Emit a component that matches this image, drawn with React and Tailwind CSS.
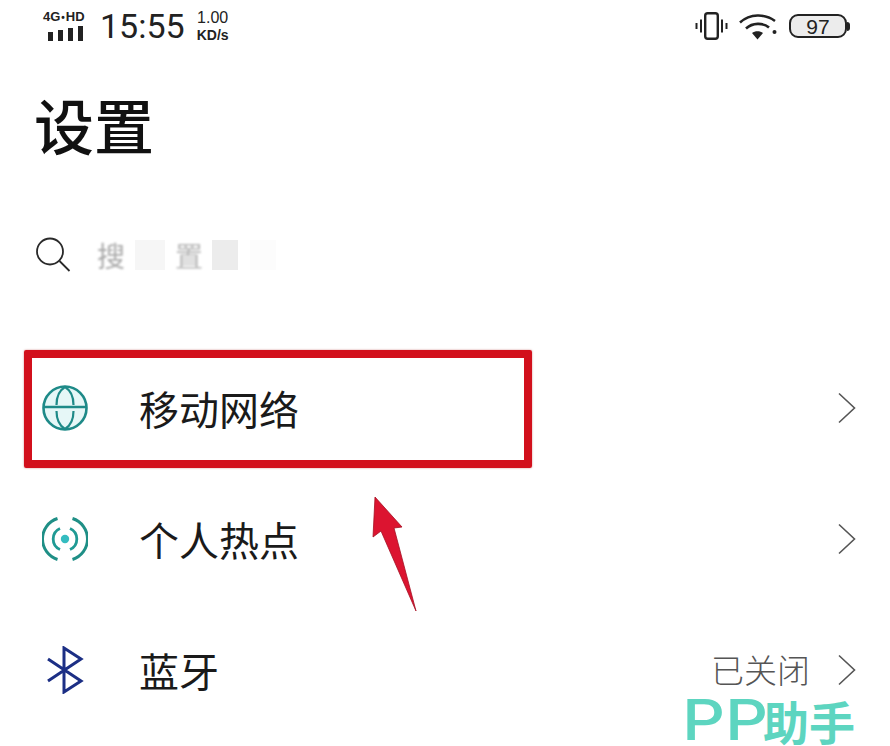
import React from 'react';

const Chevron = () => (
  <svg width="20" height="32" viewBox="0 0 20 32" fill="none" className="shrink-0">
    <path d="M2 1.5 L17.5 16 L2 30.5" stroke="#555" strokeWidth="1.6" />
  </svg>
);

const GlobeIcon = () => (
  <svg width="46" height="46" viewBox="0 0 46 46" fill="none">
    <circle cx="23" cy="23" r="21.5" fill="#e6f7f7" stroke="#1e8a88" strokeWidth="2.6" />
    <path d="M2 22 H44" stroke="#1e8a88" strokeWidth="2.4" />
    <path d="M14.5 20 C14.5 11 18 5 23 2 C28 5 31.5 11 31.5 20" stroke="#1e8a88" strokeWidth="2.2" />
    <path d="M14.5 26 C14.5 35 18 41 23 44 M31.5 26 C31.5 35 28 41 23 44" stroke="#1e8a88" strokeWidth="2.2" />
  </svg>
);

const HotspotIcon = () => (
  <svg width="46" height="46" viewBox="0 0 46 46" fill="none">
    <circle cx="23" cy="23" r="4.2" fill="#35bcc0" />
    <path d="M18 12.5 A11.5 11.5 0 0 0 18 33.5 M28 12.5 A11.5 11.5 0 0 1 28 33.5" stroke="#1f9a94" strokeWidth="2.8" />
    <path d="M15.5 2.5 A21.5 21.5 0 0 0 15.5 43.5 M30.5 2.5 A21.5 21.5 0 0 1 30.5 43.5" stroke="#1f8f86" strokeWidth="3" />
  </svg>
);

const BluetoothIcon = () => (
  <svg width="46" height="48" viewBox="0 0 46 48" fill="none">
    <path d="M6 13 L39 35 L22 46 V2 L39 13 L6 35" stroke="#1c2f85" strokeWidth="3" strokeLinejoin="miter" />
  </svg>
);

const Row = ({ icon, label, value }) => (
  <div className="flex h-[131px] items-center pl-[42px] pr-[33px]">
    <div className="flex w-[97px] shrink-0">{icon}</div>
    <span className="text-[40px] leading-none text-[#1a1a1a]">{label}</span>
    <div className="ml-auto flex items-center gap-[27px]">
      {value && <span className="text-[33px] font-light leading-none text-[#555]">{value}</span>}
      <Chevron />
    </div>
  </div>
);

export default function App() {
  return (
    <div className="relative h-[746px] w-[890px] overflow-hidden bg-white font-['Noto_Sans_CJK_SC','Noto_Sans',sans-serif]">
      {/* status bar */}
      <div className="flex h-[50px] items-center pl-[43px] pr-[40px] pt-[2px]">
        <div className="flex w-[57px] flex-col items-start">
          <span className="font-['Liberation_Sans',sans-serif] text-[13px] font-bold leading-[12px] text-[#222]">4G<span className="mx-[1px] text-[10px]">•</span>HD</span>
          <div className="ml-[5px] mt-[2px] flex items-end gap-[5px]">
            <div className="h-[9px] w-[5px] bg-[#222]" />
            <div className="h-[11px] w-[5px] bg-[#222]" />
            <div className="h-[13px] w-[5px] bg-[#222]" />
            <div className="h-[15px] w-[5px] bg-[#222]" />
          </div>
        </div>
        <span className="font-['Roboto',sans-serif] text-[34px] font-normal leading-none text-[#222]">15:55</span>
        <div className="ml-[12px] flex flex-col items-center font-['Liberation_Sans',sans-serif] text-[#222]">
          <span className="text-[16px] leading-[18px]">1.00</span>
          <span className="text-[14px] font-bold leading-[16px]">KD/s</span>
        </div>
        <div className="ml-auto flex items-center gap-[11px]">
          <svg width="33" height="28" viewBox="0 0 33 28" fill="none">
            <rect x="10.2" y="1.2" width="12.6" height="25.6" rx="2.5" stroke="#222" strokeWidth="2.4" />
            <path d="M6 7.5 V20.5" stroke="#222" strokeWidth="2" />
            <path d="M27 7.5 V20.5" stroke="#222" strokeWidth="2" />
            <path d="M1.5 11 V17" stroke="#222" strokeWidth="2" />
            <path d="M31.5 11 V17" stroke="#222" strokeWidth="2" />
          </svg>
          <svg width="39" height="27" viewBox="0 0 39 27" fill="none">
            <path d="M1 9.5 C11 0.5 26 0.5 36 8" stroke="#222" strokeWidth="2.6" />
            <path d="M7 15.5 C13.5 9.5 24 9.5 30 14.5" stroke="#222" strokeWidth="2.6" />
            <path d="M13 20 L18.5 26.5 L24 20 C21 17.5 16 17.5 13 20 Z" fill="#222" />
            <circle cx="35.5" cy="19" r="2" fill="#222" />
          </svg>
          <div className="flex items-center">
            <div className="flex h-[24px] w-[58px] items-center justify-center rounded-[9px] border-2 border-[#222] bg-[#ececec] font-['Liberation_Sans',sans-serif] text-[21px] leading-none text-[#222]">97</div>
            <div className="h-[9px] w-[3px] rounded-r-full bg-[#222]" />
          </div>
        </div>
      </div>

      {/* title */}
      <h1 className="ml-[34px] mt-[39px] text-[60px] font-medium leading-[70px] text-[#111]">设置</h1>

      {/* search */}
      <div className="ml-[36px] mt-[78px] flex h-[36px] items-center">
        <svg width="36" height="36" viewBox="0 0 36 36" fill="none" className="shrink-0">
          <circle cx="14" cy="14.5" r="13" stroke="#2a2a2a" strokeWidth="1.8" />
          <path d="M23.5 24 L33.5 34" stroke="#2a2a2a" strokeWidth="1.8" />
        </svg>
        <div className="ml-[25px] flex items-center">
          <span className="w-[28px] text-[28px] leading-none text-[#aaa] blur-[0.8px]">搜</span>
          <div className="ml-[10px] h-[30px] w-[30px] bg-[#f6f6f6]" />
          <span className="ml-[10px] w-[28px] text-[28px] leading-none text-[#b8b8b8] blur-[0.8px]">置</span>
          <div className="ml-[9px] h-[30px] w-[26px] bg-[#ececec]" />
          <div className="ml-[12px] h-[30px] w-[26px] bg-[#fcfcfc]" />
        </div>
      </div>

      {/* setting rows */}
      <div className="mt-[69px]">
        <Row icon={<GlobeIcon />} label="移动网络" />
        <Row icon={<HotspotIcon />} label="个人热点" />
        <Row icon={<BluetoothIcon />} label="蓝牙" value="已关闭" />
      </div>

      {/* red annotation box */}
      <div className="absolute left-[24px] top-[350px] h-[118px] w-[508px] rounded-[2px] border-8 border-[#d2101c] shadow-[0_0_2px_rgba(160,0,0,0.5)]" />

      {/* red arrow */}
      <svg className="absolute left-[370px] top-[494px]" width="50" height="120" viewBox="0 0 50 120">
        <path d="M5 3 L32 33 L24 34 L46 117 L11 37 L3 43 Z" fill="#dc1430" stroke="#a50f22" strokeWidth="0.8" />
      </svg>

      {/* watermark */}
      <div className="absolute left-[682px] top-[697px] flex items-center font-bold leading-[46px] text-[#5dd5c0]">
        <span className="w-[81px] origin-left scale-x-[1.2] font-['Inter',sans-serif] text-[56px] font-medium">PP</span>
        <span className="text-[46px]">助手</span>
      </div>
    </div>
  );
}
